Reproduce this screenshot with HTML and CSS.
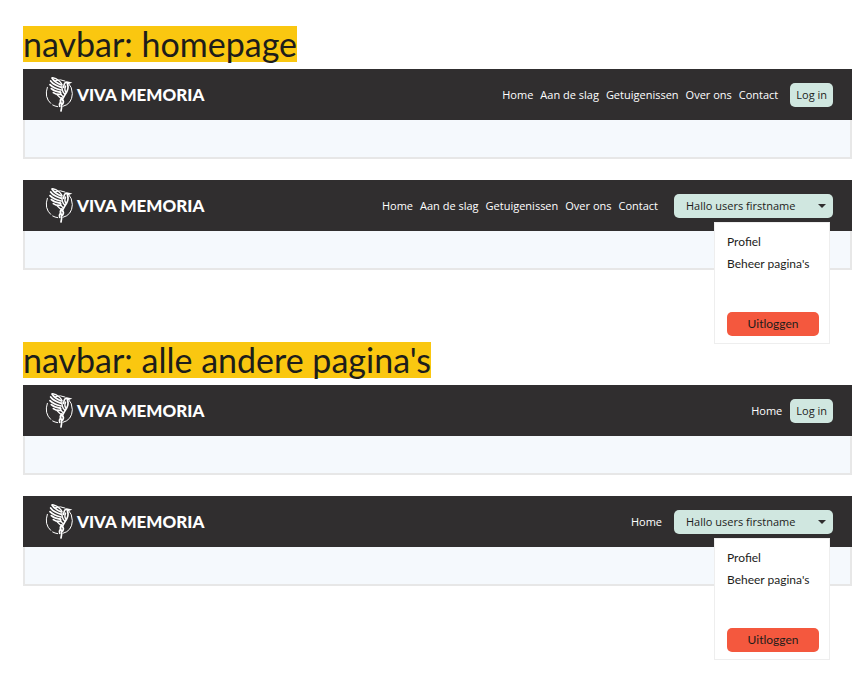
FILE: index.html
```html
<!DOCTYPE html>
<html lang="nl">
<head>
<meta charset="utf-8">
<title>Viva Memoria navbar</title>
<link rel="stylesheet" href="styles.css">
</head>
<body>
<svg class="sprite" aria-hidden="true">
  <symbol id="phoenix" viewBox="15 27 84 108">
    <g fill="none" stroke="#fff" stroke-linecap="round">
      <path d="M22 58Q12 88 32 106M38 111Q45 115 53 116M69 115Q96 108 97 77Q97 58 85 45M46 38Q62 32 75 39" stroke-width="3"/>
      <path d="M36 30Q43 42 64 51M32 39Q40 51 64 58M30 50Q40 61 63 66M34 62Q44 71 62 73M40 74Q48 80 62 79" stroke-width="5"/>
      <path d="M38 29Q58 34 66 50" stroke-width="4"/>
      <path d="M71 58Q72 43 80 42L89 44L82 47Q87 60 80 72Q73 83 66 96" stroke-width="5"/>
      <path d="M66 54Q65 70 74 78M77 54Q72 64 77 72M60 70Q62 82 70 87M51 80Q58 89 67 92" stroke-width="4"/>
      <path d="M65 90Q58 97 63 104Q67 110 63 129M67 94Q73 101 68 108M61 103Q56 109 59 115" stroke-width="5"/>
    </g>
  </symbol>
</svg>
<main class="page">
  <section class="group">
    <h1 class="title"><span class="mark">navbar: homepage</span></h1>
    <div class="sample">
      <header class="navbar">
        <a class="brand" href="#"><svg class="logo" aria-hidden="true"><use href="#phoenix"/></svg>VIVA MEMORIA</a>
        <nav class="links full">
          <a href="#">Home</a><a href="#">Aan de slag</a><a href="#">Getuigenissen</a><a href="#">Over ons</a><a href="#">Contact</a>
        </nav>
        <button class="login" type="button">Log in</button>
      </header>
      <div class="strip"></div>
    </div>
    <div class="sample">
      <header class="navbar">
        <a class="brand" href="#"><svg class="logo" aria-hidden="true"><use href="#phoenix"/></svg>VIVA MEMORIA</a>
        <nav class="links full">
          <a href="#">Home</a><a href="#">Aan de slag</a><a href="#">Getuigenissen</a><a href="#">Over ons</a><a href="#">Contact</a>
        </nav>
        <div class="account">
          <button class="user" type="button" aria-haspopup="true" aria-expanded="true">Hallo users firstname<span class="caret"></span></button>
          <div class="menu">
            <a href="#">Profiel</a>
            <a href="#">Beheer pagina's</a>
            <button class="logout" type="button">Uitloggen</button>
          </div>
        </div>
      </header>
      <div class="strip"></div>
    </div>
  </section>
  <section class="group">
    <h2 class="title"><span class="mark">navbar: alle andere pagina's</span></h2>
    <div class="sample">
      <header class="navbar">
        <a class="brand" href="#"><svg class="logo" aria-hidden="true"><use href="#phoenix"/></svg>VIVA MEMORIA</a>
        <nav class="links"><a href="#">Home</a></nav>
        <button class="login" type="button">Log in</button>
      </header>
      <div class="strip"></div>
    </div>
    <div class="sample">
      <header class="navbar">
        <a class="brand" href="#"><svg class="logo" aria-hidden="true"><use href="#phoenix"/></svg>VIVA MEMORIA</a>
        <nav class="links"><a href="#">Home</a></nav>
        <div class="account">
          <button class="user" type="button" aria-haspopup="true" aria-expanded="true">Hallo users firstname<span class="caret"></span></button>
          <div class="menu">
            <a href="#">Profiel</a>
            <a href="#">Beheer pagina's</a>
            <button class="logout" type="button">Uitloggen</button>
          </div>
        </div>
      </header>
      <div class="strip"></div>
    </div>
  </section>
</main>
</body>
</html>
```
FILE: styles.css
```css
* { box-sizing: border-box; }
body { margin: 0; background: #fff; color: #1d1d1b; font-family: "Open Sans", sans-serif; font-size: 11px; line-height: 16px; }
a { color: inherit; text-decoration: none; }
button { border: 0; padding: 0; font: inherit; color: inherit; }
.sprite { display: block; width: 0; height: 0; }
.page { display: flex; flex-direction: column; gap: 72px; padding: 26px 15px 90px 23px; }
.title { display: flex; margin: 0 0 7px; font-family: Lato, sans-serif; font-size: 34px; font-weight: 400; line-height: 36px; }
.mark { background: #fac710; white-space: nowrap; }
.sample + .sample { margin-top: 21px; }
.navbar { display: flex; align-items: center; height: 51px; padding: 0 19px 0 22px; background: #302e2f; color: #fff; }
.brand { display: flex; align-items: center; gap: 4px; margin-right: auto; font-family: Lato, sans-serif; font-size: 17px; font-weight: 900; line-height: 24px; white-space: nowrap; }
.logo { width: 28px; height: 36px; overflow: visible; }
.links { display: flex; gap: 7px; margin-right: 8px; white-space: nowrap; }
.links.full { margin-right: 12px; }
.login, .user { height: 24px; border-radius: 5px; background: #d0e7e0; color: #1d1d1b; }
.login { padding: 0 6px; }
.account { position: relative; margin-left: 4px; }
.user { display: flex; align-items: center; justify-content: space-between; width: 159px; padding: 0 7px 0 12px; white-space: nowrap; }
.caret { border: 4px solid transparent; border-top-color: #302e2f; border-bottom: 0; }
.menu { position: absolute; top: 28px; right: 3px; z-index: 1; display: flex; flex-direction: column; gap: 6px; width: 116px; height: 122px; padding: 11px 10px 7px 12px; border: 1px solid #eee; background: #fff; color: #1d1d1b; font-family: Lato, sans-serif; font-size: 12px; }
.logout { height: 24px; margin-top: auto; border-radius: 5px; background: #f4583e; color: #1d1d1b; }
.strip { height: 39px; border: 2px solid #e7e7e7; border-top: 0; background: #f5f9fd; }
```
